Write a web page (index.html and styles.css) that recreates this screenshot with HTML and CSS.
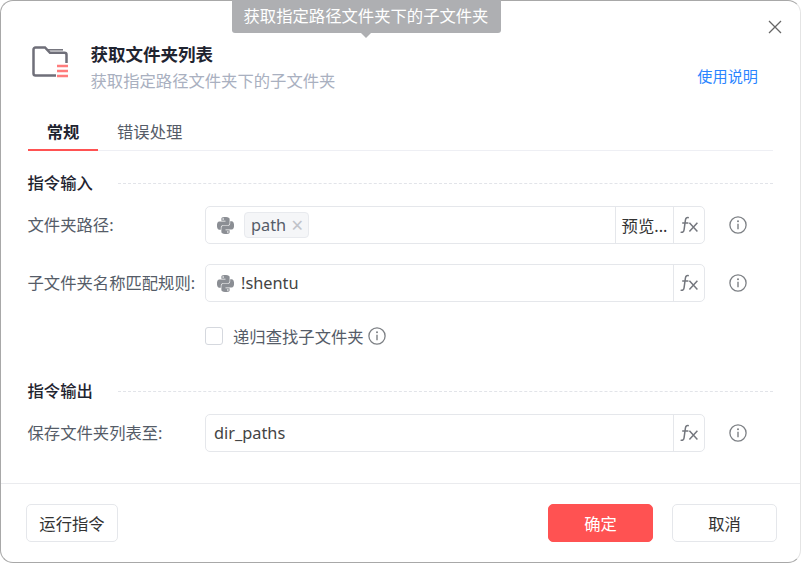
FILE: index.html
```html
<!DOCTYPE html>
<html lang="zh-CN">
<head>
<meta charset="utf-8">
<title>获取文件夹列表</title>
<link rel="stylesheet" href="styles.css">
</head>
<body>
<svg class="defs" width="0" height="0" aria-hidden="true">
  <defs>
    <symbol id="py" viewBox="0 0 24 24"><path d="M14.25.18l.9.2.73.26.59.3.45.32.34.34.25.34.16.33.1.3.04.26.02.2-.01.13V8.5l-.05.63-.13.55-.21.46-.26.38-.3.31-.33.25-.35.19-.35.14-.33.1-.3.07-.26.04-.21.02H8.77l-.69.05-.59.14-.5.22-.41.27-.33.32-.27.35-.2.36-.15.37-.1.35-.07.32-.04.27-.02.21v3.06H3.17l-.21-.03-.28-.07-.32-.12-.35-.18-.36-.26-.36-.36-.35-.46-.32-.59-.28-.73-.21-.88-.14-1.05-.05-1.23.06-1.22.16-1.04.24-.87.32-.71.36-.57.4-.44.42-.33.42-.24.4-.16.36-.1.32-.05.24-.01h.16l.06.01h8.16v-.83H6.18l-.01-2.75-.02-.37.05-.34.11-.31.17-.28.25-.26.31-.23.38-.2.44-.18.51-.15.58-.12.64-.1.71-.06.77-.04.84-.02 1.27.05zm-6.3 1.98l-.23.33-.08.41.08.41.23.34.33.22.41.09.41-.09.33-.22.23-.34.08-.41-.08-.41-.23-.33-.33-.22-.41-.09-.41.09zm13.09 3.95l.28.06.32.12.35.18.36.27.36.35.35.47.32.59.28.73.21.88.14 1.04.05 1.23-.06 1.23-.16 1.04-.24.86-.32.71-.36.57-.4.45-.42.33-.42.24-.4.16-.36.09-.32.05-.24.02-.16-.01h-8.22v.82h5.84l.01 2.76.02.36-.05.34-.11.31-.17.29-.25.25-.31.24-.38.2-.44.17-.51.15-.58.13-.64.09-.71.07-.77.04-.84.01-1.27-.04-1.07-.14-.9-.2-.73-.25-.59-.3-.45-.33-.34-.34-.25-.34-.16-.33-.1-.3-.04-.25-.02-.2.01-.13v-5.34l.05-.64.13-.54.21-.46.26-.38.3-.32.33-.24.35-.2.35-.14.33-.1.3-.06.26-.04.21-.02.13-.01h5.84l.69-.05.59-.14.5-.21.41-.28.33-.32.27-.35.2-.36.15-.36.1-.35.07-.32.04-.28.02-.21V6.07h2.09l.14.01zm-6.47 14.25l-.23.33-.08.41.08.41.23.33.33.23.41.08.41-.08.33-.23.23-.33.08-.41-.08-.41-.23-.33-.33-.23-.41-.08-.41.08z"/></symbol>
    <symbol id="fx" viewBox="0 0 18 18"><path d="M8.800 1.800C6.800 1 5.700 2.200 5.400 4.200L4.100 13.600C3.800 15.800 2.700 16.800 .6 16.100M2.200 7H8.400" fill="none" stroke="currentColor" stroke-width="1.500"/><path d="M9.400 6.800l8 8.600M17.400 6.800l-8 8.600" fill="none" stroke="currentColor" stroke-width="1.500"/></symbol>
    <symbol id="info" viewBox="0 0 18 18"><circle cx="9" cy="9" r="8.100" fill="none" stroke="currentColor" stroke-width="1.300"/><path d="M9 7.800v5.400" fill="none" stroke="currentColor" stroke-width="1.400"/><circle cx="9" cy="5.300" r="1" fill="currentColor"/></symbol>
  </defs>
</svg>
<div class="modal">
  <header class="head">
    <svg class="folder" width="38" height="32" viewBox="0 0 38 32">
      <path d="M24 29.500H3.500a2 2 0 0 1-2-2V3.500a2 2 0 0 1 2-2H13l5 5.300H32.500a2 2 0 0 1 2 2V17" fill="none" stroke="#6f6f79" stroke-width="2.500"/>
      <path d="M15 3.800H31" fill="none" stroke="#6f6f79" stroke-width="1.500"/>
      <path d="M25 20h11M25 25h11M25 30h11" fill="none" stroke="#ff7c7c" stroke-width="2.500"/>
    </svg>
    <div class="head-text">
      <h1 class="title">获取文件夹列表</h1>
      <p class="sub">获取指定路径文件夹下的子文件夹</p>
    </div>
    <a class="help">使用说明</a>
  </header>
  <nav class="tabs">
    <span class="tab active">常规</span>
    <span class="tab">错误处理</span>
  </nav>
  <section class="sec first">
    <div class="sec-head"><span>指令输入</span><i class="dash"></i></div>
    <div class="row">
      <label class="lab">文件夹路径:</label>
      <div class="field">
        <svg class="py"><use href="#py"/></svg>
        <span class="tag">path<b class="tag-x">×</b></span>
        <span class="grow"></span>
        <span class="preview">预览...</span>
        <span class="fxb"><svg class="fx"><use href="#fx"/></svg></span>
      </div>
      <svg class="info"><use href="#info"/></svg>
    </div>
    <div class="row">
      <label class="lab">子文件夹名称匹配规则:</label>
      <div class="field">
        <svg class="py"><use href="#py"/></svg>
        <span class="val">!shentu</span>
        <span class="grow"></span>
        <span class="fxb"><svg class="fx"><use href="#fx"/></svg></span>
      </div>
      <svg class="info"><use href="#info"/></svg>
    </div>
    <div class="check">
      <span class="box"></span>
      <span>递归查找子文件夹</span>
      <svg class="info small"><use href="#info"/></svg>
    </div>
  </section>
  <section class="sec second">
    <div class="sec-head"><span>指令输出</span><i class="dash"></i></div>
    <div class="row">
      <label class="lab">保存文件夹列表至:</label>
      <div class="field">
        <span class="val plain">dir_paths</span>
        <span class="grow"></span>
        <span class="fxb"><svg class="fx"><use href="#fx"/></svg></span>
      </div>
      <svg class="info"><use href="#info"/></svg>
    </div>
  </section>
  <footer class="foot">
    <button class="btn run">运行指令</button>
    <span class="grow"></span>
    <button class="btn ok">确定</button>
    <button class="btn cancel">取消</button>
  </footer>
  <div class="tip">获取指定路径文件夹下的子文件夹</div>
  <svg class="close" width="14" height="14" viewBox="0 0 14 14"><path d="M1 1l12 12M13 1L1 13" fill="none" stroke="#666" stroke-width="1.300"/></svg>
</div>
</body>
</html>
```
FILE: styles.css
```css
* { box-sizing: border-box; }
html, body { margin: 0; height: 100%; background: #fff; }
body { font-family: "Noto Sans", "Noto Sans CJK SC", sans-serif; font-size: 16.33px; color: #333; overflow: hidden; }
.defs { position: absolute; }
.modal { position: relative; width: 801px; height: 563px; display: flex; flex-direction: column; background: #fff; border: 1px solid #a8a8a8; border-right-color: #e4e4e4; border-radius: 13px; }
.head { display: flex; align-items: flex-start; height: 97px; padding: 45px 0 0 31px; }
.folder { flex: none; }
.head-text { margin-left: 20.5px; margin-top: -5px; flex: 1; }
.title { margin: 0; font-size: 17.5px; line-height: 26px; font-weight: 700; color: #1f2430; }
.sub { margin: 2px 0 0; font-size: 16.33px; line-height: 24px; color: #a9b0c0; }
.help { font-size: 15.17px; line-height: 22px; color: #2a85ff; margin: 19px 42px 0 0; }
.tabs { display: flex; height: 53px; margin: 0 27px; padding-top: 10px; border-bottom: 1px solid #eeeff4; }
.tab { width: 70px; height: 43px; padding-top: 10px; line-height: 28px; text-align: center; color: #555c68; margin-bottom: -1px; }
.tab + .tab { width: auto; margin-left: 19px; }
.tab.active { color: #1f2430; font-weight: 700; border-bottom: 2px solid #ff5252; }
.sec { padding: 0 27px; }
.first { padding-top: 20px; }
.second { padding-top: 32px; }
.sec-head { display: flex; align-items: center; height: 24px; font-weight: 500; color: #1f2430; margin-bottom: 11px; }
.sec-head span { margin: -2px 0 0 -0.5px; }
.dash { flex: 1; margin-left: 25px; border-top: 1px dashed #e2e4e9; }
.row { display: flex; align-items: center; height: 38px; margin-bottom: 20px; }
.second .row { margin-bottom: 0; }
.lab { width: 177px; flex: none; margin-top: -2px; text-indent: -0.5px; color: #555c68; white-space: nowrap; }
.field { width: 500px; height: 38px; flex: none; display: flex; align-items: center; border: 1px solid #e5e7eb; border-radius: 5px; }
.grow { flex: 1; }
.py { width: 17px; height: 17px; margin-left: 11px; fill: #8b8e94; flex: none; }
.tag { display: flex; align-items: center; height: 26px; margin-left: 10px; padding: 0 5px 0 6px; background: #f5f6f8; border: 1px solid #e8eaee; border-radius: 4px; color: #555c68; }
.tag-x { font-weight: 400; color: #c0c3c9; margin-left: 5px; font-size: 21px; line-height: 20px; }
.val { margin-left: 7px; color: #444; }
.plain { margin-left: 8px; }
.preview { align-self: stretch; width: 58px; display: flex; align-items: center; justify-content: center; border-left: 1px solid #e5e7eb; white-space: nowrap; }
.fxb { align-self: stretch; width: 31px; display: flex; align-items: center; justify-content: center; border-left: 1px solid #e5e7eb; }
.fx { width: 18px; height: 18px; color: #74777e; }
.info { width: 18px; height: 18px; margin-left: 24px; color: #7d8085; flex: none; }
.info.small { margin-left: 4px; }
.check { display: flex; align-items: center; height: 22px; margin: 23px 0 0 177px; color: #555c68; }
.box { width: 18px; height: 18px; margin-right: 10px; border: 1px solid #d5d8de; border-radius: 3px; }
.foot { display: flex; align-items: center; gap: 19px; margin-top: auto; height: 79px; padding: 0 23px 0 25px; border-top: 1px solid #eaebee; }
.btn { height: 38px; font: inherit; border: 1px solid #e5e7eb; border-radius: 5px; background: #fff; color: #333; padding: 0; }
.run { width: 92px; }
.ok { width: 105px; background: #ff5252; border-color: #ff5252; color: #fff; }
.cancel { width: 105px; }
.tip { position: absolute; left: 231px; top: -1px; width: 269px; height: 33px; padding: 1px 1px 0 0; text-align: center; line-height: 30px; background: #aeafb2; color: #fff; border-radius: 0 0 3px 3px; }
.tip::after { content: ""; position: absolute; left: 129px; top: 33px; border: 5px solid transparent; border-top-color: #aeafb2; border-bottom: 0; }
.close { position: absolute; left: 767px; top: 19px; }
```
